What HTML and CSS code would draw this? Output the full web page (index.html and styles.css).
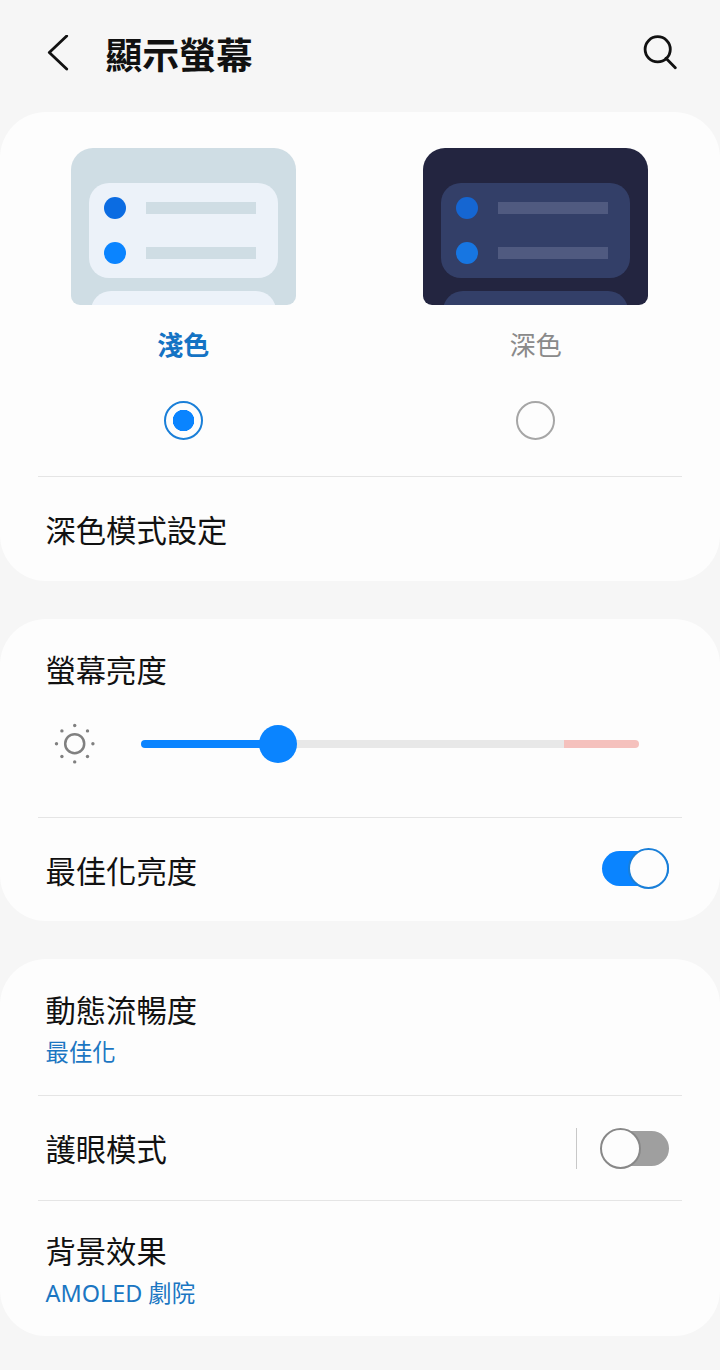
FILE: index.html
```html
<!DOCTYPE html>
<html lang="zh-Hant">
<head>
<meta charset="utf-8">
<title>顯示螢幕</title>
<link rel="stylesheet" href="styles.css">
</head>
<body>
<header class="appbar">
  <svg class="back" width="24" height="38" viewBox="0 0 24 38" aria-hidden="true"><path d="M20.7 1 L3.3 17.5 L20.7 34"/></svg>
  <h1 class="title">顯示螢幕</h1>
  <svg class="search" width="36" height="38" viewBox="0 0 36 38" aria-hidden="true"><circle cx="16.7" cy="14.3" r="12.6"/><path d="M25 23.3 L34.3 32.7"/></svg>
</header>
<main class="cards">
  <section class="card card-theme">
    <div class="themes">
      <div class="theme">
        <div class="preview preview-light">
          <div class="panel">
            <div class="line"><span class="dot dot-a"></span><span class="bar"></span></div>
            <div class="line"><span class="dot dot-b"></span><span class="bar"></span></div>
          </div>
          <div class="panel-next"></div>
        </div>
        <div class="theme-label theme-label-on">淺色</div>
        <div class="radio radio-on"></div>
      </div>
      <div class="theme">
        <div class="preview preview-dark">
          <div class="panel">
            <div class="line"><span class="dot dot-a"></span><span class="bar"></span></div>
            <div class="line"><span class="dot dot-b"></span><span class="bar"></span></div>
          </div>
          <div class="panel-next"></div>
        </div>
        <div class="theme-label">深色</div>
        <div class="radio"></div>
      </div>
    </div>
    <hr class="divider divider-theme">
    <div class="row row-dark"><span class="row-title">深色模式設定</span></div>
  </section>

  <section class="card card-bright">
    <div class="bright-title">螢幕亮度</div>
    <div class="slider-row">
      <svg class="sun" width="44" height="44" viewBox="0 0 44 44" aria-hidden="true">
        <circle class="sun-ring" cx="21.7" cy="21.7" r="9.5"/>
        <g class="sun-dots">
          <circle cx="21.7" cy="3.5" r="1.7"/><circle cx="21.7" cy="39.9" r="1.7"/>
          <circle cx="3.5" cy="21.7" r="1.7"/><circle cx="39.9" cy="21.7" r="1.7"/>
          <circle cx="8.9" cy="8.9" r="1.7"/><circle cx="34.5" cy="8.9" r="1.7"/>
          <circle cx="8.9" cy="34.5" r="1.7"/><circle cx="34.5" cy="34.5" r="1.7"/>
        </g>
      </svg>
      <div class="slider">
        <span class="seg seg-fill"></span>
        <span class="seg seg-rest"></span>
        <span class="seg seg-high"></span>
        <span class="knob"></span>
      </div>
    </div>
    <hr class="divider divider-bright">
    <div class="row row-auto">
      <span class="row-title">最佳化亮度</span>
      <span class="switch switch-on"><span class="thumb"></span></span>
    </div>
  </section>

  <section class="card card-more">
    <div class="row row-motion">
      <div class="stack">
        <span class="row-title">動態流暢度</span>
        <span class="row-sub">最佳化</span>
      </div>
    </div>
    <hr class="divider">
    <div class="row row-eye">
      <span class="row-title">護眼模式</span>
      <div class="row-end">
        <span class="vrule"></span>
        <span class="switch switch-off"><span class="thumb"></span></span>
      </div>
    </div>
    <hr class="divider">
    <div class="row row-effect">
      <div class="stack">
        <span class="row-title">背景效果</span>
        <span class="row-sub">AMOLED 劇院</span>
      </div>
    </div>
  </section>
</main>
</body>
</html>
```

FILE: styles.css
```css
* { box-sizing: border-box; }
html, body { margin: 0; padding: 0; }
body {
  width: 720px;
  height: 1370px;
  overflow: hidden;
  background: #f6f6f6;
  color: #111;
  font-family: "Noto Sans", "Noto Sans CJK TC", sans-serif;
}

.appbar {
  height: 112px;
  display: flex;
  align-items: center;
  padding: 0 43px 4px 46px;
}
.back, .search { fill: none; stroke: #111; stroke-width: 2.8; stroke-linecap: round; stroke-linejoin: round; }
.title {
  margin: 2px 0 0 35.5px;
  font-size: 36.8px;
  font-weight: 700;
  line-height: 44px;
  color: #111;
}
.search { margin-left: auto; }

.cards { display: flex; flex-direction: column; gap: 38px; }
.card { background: #fdfdfd; border-radius: 46px; }
.card-theme { height: 469px; padding-top: 36px; }
.card-bright { height: 302px; padding-top: 32px; }
.card-more { height: 377px; }

.themes { display: grid; grid-template-columns: 352.5px 352.5px; padding-left: 7px; }
.theme { display: flex; flex-direction: column; align-items: center; }

.preview {
  width: 225px;
  height: 157px;
  border-radius: 22px 22px 9px 9px;
  padding: 35px 18px 0;
  overflow: hidden;
}
.panel { height: 95px; border-radius: 20px; padding: 14px 15px 0; display: flex; flex-direction: column; gap: 23px; }
.panel-next { height: 40px; margin: 13px 2px 0; border-radius: 20px; }
.line { display: flex; align-items: center; gap: 20px; height: 22px; }
.dot { width: 22px; height: 22px; border-radius: 50%; }
.bar { width: 110px; height: 12px; }

.preview-light { background: #cfdde4; }
.preview-light .panel, .preview-light .panel-next { background: #ecf2f9; }
.preview-light .bar { background: #cfdde4; }
.preview-light .dot-a { background: #0b6ce2; }
.preview-light .dot-b { background: #0a84ff; }

.preview-dark { background: #232540; }
.preview-dark .panel, .preview-dark .panel-next { background: #333f68; }
.preview-dark .bar { background: #505a80; }
.preview-dark .dot-a { background: #1566d2; }
.preview-dark .dot-b { background: #1776e2; }

.theme-label {
  margin-top: 22px;
  font-size: 26px;
  line-height: 36px;
  color: #8a8a8a;
}
.theme-label-on { color: #1473c4; font-weight: 700; }

.radio {
  width: 39px;
  height: 39px;
  margin-top: 38px;
  border-radius: 50%;
  border: 2px solid #a6a6a6;
}
.radio-on {
  border-color: #1a7fd8;
  background: radial-gradient(circle, #0a84ff 0 10.5px, transparent 11px);
}

.divider { height: 1px; margin: 0 38px; border: 0; background: #e5e5e5; }
.divider-theme { margin-top: 36px; }

.row { display: flex; align-items: center; justify-content: space-between; padding: 0 51px 0 45.5px; }
.row-dark { height: 104px; }
.row-title { display: block; padding-top: 4px; font-size: 30.3px; line-height: 40px; color: #111; }
.row-auto { height: 103px; }
.row-motion { height: 136px; }
.row-eye { height: 104px; }
.row-effect { height: 135px; }

.bright-title { padding-left: 45.5px; font-size: 30.3px; line-height: 40px; color: #111; }
.slider-row { display: flex; align-items: center; margin-top: 31px; padding-left: 53px; height: 44px; }
.sun { flex: none; }
.sun-ring { fill: none; stroke: #808080; stroke-width: 2.5; }
.sun-dots { fill: #808080; }

.slider { position: relative; display: flex; margin-left: 44px; width: 498px; height: 8px; }
.seg { display: block; height: 8px; }
.seg-fill { width: 137px; background: #0a84ff; border-radius: 4px 0 0 4px; }
.seg-rest { width: 286px; background: #e8e8e8; }
.seg-high { width: 75px; background: #f5c1bd; border-radius: 0 4px 4px 0; }
.knob {
  position: absolute;
  left: 117.5px;
  top: -15px;
  width: 38px;
  height: 38px;
  border-radius: 50%;
  background: #0a84ff;
}
.divider-bright { margin-top: 51px; }

.switch { position: relative; display: block; width: 67px; height: 35px; border-radius: 18px; }
.switch-on { margin-top: -2px; background: #0a84ff; }
.switch-off { background: #9f9f9f; }
.thumb {
  position: absolute;
  top: -3px;
  width: 41px;
  height: 41px;
  border-radius: 50%;
  background: #fdfdfd;
  border: 2.5px solid #1a7fd8;
}
.switch-on .thumb { right: 0; }
.switch-off .thumb { left: -2px; border-color: #888; }

.row-end { display: flex; align-items: center; gap: 25px; }
.vrule { display: block; width: 1px; height: 41px; background: #c8c8c8; }

.stack { display: flex; flex-direction: column; }
.row-sub { margin-top: 5px; font-size: 23.4px; line-height: 32px; color: #1b76c2; }
```
